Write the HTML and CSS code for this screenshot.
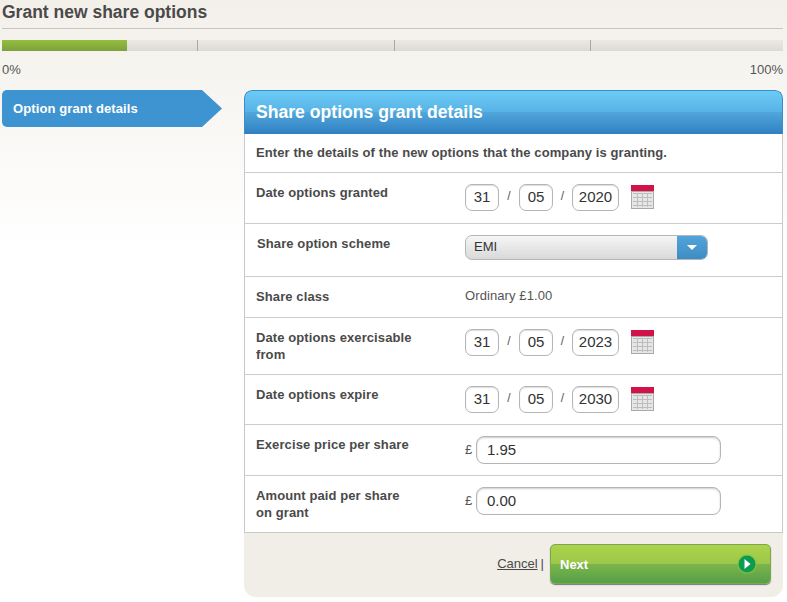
FILE: index.html
```html
<!DOCTYPE html>
<html lang="en">
<head>
<meta charset="utf-8">
<title>Grant new share options</title>
<link rel="stylesheet" href="styles.css">
</head>
<body>
<div class="page">
  <h1 class="title">Grant new share options</h1>
  <div class="progress">
    <div class="progress-fill"></div>
    <div class="tick"></div><div class="tick"></div><div class="tick"></div><div class="tick tick-last"></div>
  </div>
  <div class="progress-labels"><span>0%</span><span>100%</span></div>
  <div class="main">
    <nav class="steps">
      <svg class="step-bg" width="220" height="37" viewBox="0 0 220 37"><path d="M5 0H200L220 18.5 200 37H5A5 5 0 0 1 0 32V5A5 5 0 0 1 5 0Z" fill="#3d94d0"/></svg>
      <span class="step-label">Option grant details</span>
    </nav>
    <section class="panel">
      <h2 class="panel-head">Share options grant details</h2>
      <div class="form">
        <p class="intro">Enter the details of the new options that the company is granting.</p>
        <div class="row r1">
          <div class="label">Date options granted</div>
          <div class="field">
            <span class="box dd">31</span><span class="sep">/</span><span class="box dd">05</span><span class="sep sep-b">/</span><span class="box yy">2020</span>
            <svg class="cal" width="23" height="24" viewBox="0 0 23 24"><use href="#cal"/></svg>
          </div>
        </div>
        <div class="row r2">
          <div class="label l-scheme">Share option scheme</div>
          <div class="field">
            <div class="select"><span class="select-text">EMI</span><span class="select-btn"><svg width="10" height="5" viewBox="0 0 10 5"><path d="M0 0H10L5 5Z" fill="#fff"/></svg></span></div>
          </div>
        </div>
        <div class="row r3">
          <div class="label">Share class</div>
          <div class="field plain">Ordinary £1.00</div>
        </div>
        <div class="row r4">
          <div class="label">Date options exercisable<br>from</div>
          <div class="field">
            <span class="box dd">31</span><span class="sep">/</span><span class="box dd">05</span><span class="sep sep-b">/</span><span class="box yy">2023</span>
            <svg class="cal" width="23" height="24" viewBox="0 0 23 24"><use href="#cal"/></svg>
          </div>
        </div>
        <div class="row r5">
          <div class="label">Date options expire</div>
          <div class="field">
            <span class="box dd">31</span><span class="sep">/</span><span class="box dd">05</span><span class="sep sep-b">/</span><span class="box yy">2030</span>
            <svg class="cal" width="23" height="24" viewBox="0 0 23 24"><use href="#cal"/></svg>
          </div>
        </div>
        <div class="row r6">
          <div class="label">Exercise price per share</div>
          <div class="field"><span class="pound">£</span><span class="money">1.95</span></div>
        </div>
        <div class="row r7">
          <div class="label">Amount paid per share<br>on grant</div>
          <div class="field"><span class="pound">£</span><span class="money">0.00</span></div>
        </div>
      </div>
      <div class="actions">
        <a class="cancel" href="#">Cancel</a><span class="pipe">|</span>
        <button class="next" type="button"><span>Next</span>
          <svg width="20" height="20" viewBox="0 0 20 20"><circle cx="10" cy="10" r="10" fill="#8cc63f" opacity=".55"/><circle cx="10" cy="10" r="8.5" fill="#0a9d50"/><path d="M7.5 5L13.5 10 7.5 15Z" fill="#fff"/></svg>
        </button>
      </div>
    </section>
  </div>
</div>
<svg class="defs" width="0" height="0">
  <defs>
    <symbol id="cal" viewBox="0 0 23 24">
      <rect x="0.5" y="6.5" width="22" height="17" fill="#e6e6e6" stroke="#aaa"/>
      <rect x="0" y="0" width="23" height="6" fill="#d0144a"/>
      <path d="M2 8.5H21M2 12.5H21M2 16.5H21M2 20.5H21M6.5 8V22M11.5 8V22M16.5 8V22" stroke="#bdbdbd" fill="none"/>
    </symbol>
  </defs>
</svg>
</body>
</html>
```
FILE: styles.css
```css
* { box-sizing: border-box; }
html, body { margin: 0; padding: 0; }
body {
  font-family: "Liberation Sans", Arial, sans-serif;
  color: #4a4a4a;
  background: linear-gradient(#f3f0ea 0, #ffffff 250px);
  height: 602px;
  overflow: hidden;
}
.page { padding: 0 4px 0 2px; width: 787px; }
.title {
  margin: 0;
  height: 29px;
  font-size: 17.5px;
  line-height: 24px;
  font-weight: bold;
  color: #4a4a4a;
  border-bottom: 1px solid #c9c5bd;
}
.progress {
  margin-top: 11px;
  height: 11px;
  display: flex;
  position: relative;
  background: linear-gradient(#ebe9e6, #dcdad7);
  width: 781px;
}
.progress-fill {
  position: absolute;
  left: 0; top: 0; bottom: 0;
  width: 125px;
  background: linear-gradient(#94bf3c, #7da03e);
}
.tick { flex: none; width: 196.3px; border-right: 1px solid #aaa8a4; }
.tick-last { flex: 1; border-right: 0; }
.progress-labels {
  display: flex;
  justify-content: space-between;
  margin-top: 12px;
  width: 781px;
  font-size: 13px;
  line-height: 14px;
  color: #555;
}
.main { display: flex; margin-top: 13px; align-items: flex-start; }
.steps { width: 242px; height: 37px; position: relative; flex: none; }
.step-bg { position: absolute; left: 0; top: 0; }
.step-label {
  position: absolute;
  left: 11px; top: 11px;
  font-size: 13px;
  line-height: 16px;
  font-weight: bold;
  letter-spacing: .1px;
  color: #fff;
}
.panel {
  width: 539px;
  background: #f1eee8;
  border-radius: 8px 8px 12px 12px;
  overflow: hidden;
  height: 507px;
}
.panel-head {
  margin: 0;
  height: 44px;
  padding-left: 11px;
  font-size: 17.6px;
  line-height: 42px;
  font-weight: bold;
  color: #fff;
  border: 1px solid #3a8ccb;
  border-bottom: 0;
  border-radius: 8px 8px 0 0;
  background: linear-gradient(#6ccbf6 0, #58b3e6 48%, #50a6db 50%, #3080c2 100%);
}
.form { background: #fff; border: 1px solid #c9c9c9; border-top: 0; }
.intro {
  margin: 0;
  height: 39px;
  padding: 11px 11px 0;
  font-size: 13px;
  line-height: 16px;
  font-weight: bold;
  letter-spacing: .1px;
  border-bottom: 1px solid #ccc;
}
.row { display: flex; border-bottom: 1px solid #ccc; }
.row:last-child { border-bottom: 0; }
.r1 { height: 51px; }
.r2 { height: 53px; }
.r3 { height: 41px; }
.r4 { height: 57px; }
.r5 { height: 50px; }
.r6 { height: 51px; }
.r7 { height: 56px; }
.label {
  width: 220px;
  padding: 11px 0 0 11px;
  font-size: 13px;
  line-height: 17px;
  font-weight: bold;
  letter-spacing: .1px;
  flex: none;
}
.l-scheme { padding-left: 12px; }
.field { display: flex; align-items: flex-start; padding-top: 11px; }
.box {
  height: 27px;
  background: #fff;
  border: 1px solid #b5b5b5;
  border-radius: 7px;
  font-size: 15px;
  line-height: 24px;
  text-align: center;
  color: #333;
  box-shadow: inset 0 1px 1px #ddd;
}
.dd { width: 34px; }
.yy { width: 47px; }
.sep { width: 20px; text-align: center; font-size: 12px; line-height: 25px; color: #555; }
.sep-b { width: 19px; }
.cal { margin-left: 12px; margin-top: 1px; }
.select {
  display: flex;
  width: 243px;
  height: 25px;
  border: 1px solid #b5b5b5;
  border-radius: 7px;
  overflow: hidden;
  background: linear-gradient(#f6f6f6, #d9d9d9);
}
.select-text { flex: 1; padding-left: 8px; font-size: 13px; line-height: 22px; color: #333; }
.select-btn {
  width: 30px;
  display: flex;
  align-items: center;
  justify-content: center;
  background: linear-gradient(#52a4da, #3f8cc4);
}
.plain { font-size: 13px; line-height: 16px; padding-top: 11px; color: #555; letter-spacing: .1px; }
.pound { width: 11px; font-size: 13px; line-height: 27px; color: #555; }
.money {
  width: 245px;
  height: 28px;
  border: 1px solid #b5b5b5;
  border-radius: 8px;
  font-size: 15px;
  line-height: 25px;
  padding-left: 10px;
  color: #333;
  background: #fff;
  box-shadow: inset 0 1px 2px #ccc;
}
.actions { display: flex; align-items: flex-start; justify-content: flex-end; padding: 11px 12px 0 0; }
.cancel { font-size: 13px; line-height: 40px; color: #4a4a4a; }
.pipe { font-size: 13px; line-height: 40px; margin: 0 6px 0 3px; color: #4a4a4a; }
.next {
  width: 221px;
  height: 40px;
  padding: 0 13px 0 9px;
  display: flex;
  align-items: center;
  justify-content: space-between;
  border: 1px solid #7aa84a;
  border-radius: 5px;
  font-family: "Liberation Sans", Arial, sans-serif;
  font-size: 13px;
  font-weight: bold;
  color: #fff;
  background: linear-gradient(#acd34a 0, #9cc74a 50%, #7cb54a 50%, #55a049 100%);
  box-shadow: 0 1px 1px #777;
}
.defs { position: absolute; }
```
